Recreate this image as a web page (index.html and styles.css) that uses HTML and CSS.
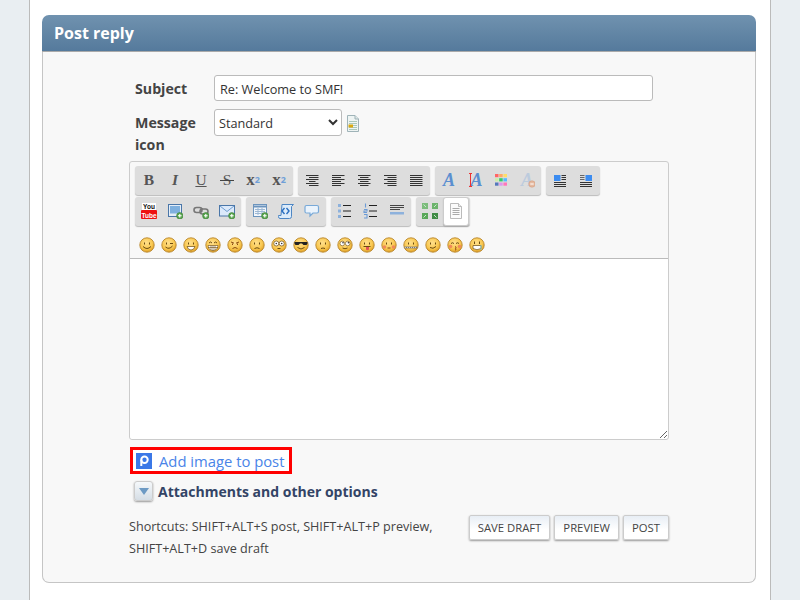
FILE: index.html
```html
<!DOCTYPE html>
<html lang="en">
<head>
<meta charset="utf-8">
<title>Post reply</title>
<link rel="stylesheet" href="styles.css">
</head>
<body>
<svg class="defs" width="0" height="0">
  <defs>
    <radialGradient id="sm" cx="45%" cy="35%" r="70%"><stop offset="0" stop-color="#ffdf8c"/><stop offset=".6" stop-color="#f9c850"/><stop offset="1" stop-color="#d9951c"/></radialGradient>
    <g id="face"><circle cx="8" cy="8" r="7.200" fill="url(#sm)" stroke="#b8862c" stroke-width=".9"/></g>
    <g id="eyes"><path d="M5.500 5.500v2M10.500 5.500v2" stroke="#6b4a10" stroke-width="1"/></g>
    <g id="plus"><circle cx="12.800" cy="12.800" r="3.200" fill="#5aa650" stroke="#3d7d36" stroke-width=".6"/><path d="M11 12.800h3.600M12.800 11v3.600" stroke="#fff" stroke-width="1.100"/></g>
  </defs>
</svg>
<div class="wrapper">
  <section class="panel">
    <h2 class="panel-title">Post reply</h2>
    <form class="panel-body">
      <div class="fields">
        <div class="field">
          <label class="field-label">Subject</label>
          <input class="subject" type="text" value="Re: Welcome to SMF!">
        </div>
        <div class="field">
          <label class="field-label">Message icon</label>
          <select class="icon-select"><option>Standard</option></select>
          <svg class="msg-icon" width="12" height="17" viewBox="0 0 12 17"><path d="M.5.500h7.500l3.500 3.500v12.500H.5z" fill="#eef4f3" stroke="#9fb3b8"/><path d="M8 .5v3.500h3.500" fill="#dfe8e8" stroke="#9fb3b8"/><path d="M2 6.500h8M2 8.500h8M2 10.500h8M2 12.500h8M2 14.500h8" stroke="#a9c8b8"/><rect x="1.500" y="9.500" width="4.500" height="3" fill="#d9a810"/></svg>
        </div>
      </div>

      <div class="editor">
        <div class="toolbar">
          <div class="tool-row">
            <div class="tool-group">
              <span class="tool glyph">B</span>
              <span class="tool glyph italic">I</span>
              <span class="tool glyph thin"><span class="under">U</span></span>
              <span class="tool glyph thin"><span class="strike">S</span></span>
              <span class="tool glyph low">x<sup class="script">2</sup></span>
              <span class="tool glyph low">x<sub class="script">2</sub></span>
            </div>
            <div class="tool-group">
              <span class="tool"><svg class="ic" viewBox="0 0 16 16"><path d="M2 3.500h12.500M5 5.500h9.500M2 7.500h12.500M5 9.500h6.500M2 11.500h12.500M5 13.500h9.500" stroke="#333"/></svg></span>
              <span class="tool"><svg class="ic" viewBox="0 0 16 16"><path d="M2 3.500h12.500M2 5.500h9M2 7.500h12.500M2 9.500h9M2 11.500h12.500M2 13.500h9" stroke="#333"/></svg></span>
              <span class="tool"><svg class="ic" viewBox="0 0 16 16"><path d="M2 3.500h12.500M4 5.500h8.500M2 7.500h12.500M4 9.500h8.500M2 11.500h12.500M4 13.500h8.500" stroke="#333"/></svg></span>
              <span class="tool"><svg class="ic" viewBox="0 0 16 16"><path d="M2 3.500h12.500M5.500 5.500h9M2 7.500h12.500M5.500 9.500h9M2 11.500h12.500M5.500 13.500h9" stroke="#333"/></svg></span>
              <span class="tool"><svg class="ic" viewBox="0 0 16 16"><path d="M2 3.500h12.500M2 5.500h12.500M2 7.500h12.500M2 9.500h12.500M2 11.500h12.500M2 13.500h12.500" stroke="#333"/></svg></span>
            </div>
            <div class="tool-group">
              <span class="tool"><span class="font-a">A</span></span>
              <span class="tool"><span class="font-a shifted">A</span><svg class="ic over" viewBox="0 0 16 16"><path d="M3.500 1.500v13M2 1.500h3M2 14.500h3" stroke="#e33"/></svg></span>
              <span class="tool"><svg class="palette" viewBox="0 0 12 12"><rect width="3.500" height="3.200" fill="#f66"/><rect x="4.200" width="3.500" height="3.200" fill="#fa6"/><rect x="8.400" width="3.600" height="3.200" fill="#fd6"/><rect y="4.200" width="3.500" height="3.200" fill="#cea"/><rect x="4.200" y="4.200" width="3.500" height="3.200" fill="#3c6"/><rect x="8.400" y="4.200" width="3.600" height="3.200" fill="#5bf"/><rect y="8.500" width="3.500" height="3.200" fill="#57b"/><rect x="4.200" y="8.500" width="3.500" height="3.200" fill="#d9e"/><rect x="8.400" y="8.500" width="3.600" height="3.200" fill="#f7b"/></svg></span>
              <span class="tool"><span class="font-a faded">A</span><svg class="ic over" viewBox="0 0 16 16"><circle cx="13" cy="12" r="3.200" fill="#e5b9a0" stroke="#d49a7a" stroke-width=".6"/><path d="M11.300 12h3.400" stroke="#fff"/></svg></span>
            </div>
            <div class="tool-group">
              <span class="tool"><svg class="ic" viewBox="0 0 16 16"><rect x="2" y="3" width="6.500" height="6" fill="#3c8cf0"/><path d="M9.500 3.500H14M9.500 5.500H14M9.500 7.500H14M2 10.500h12M2 12.500h12M2 14.500h12" stroke="#333"/></svg></span>
              <span class="tool"><svg class="ic" viewBox="0 0 16 16"><rect x="7.500" y="3" width="6.500" height="6" fill="#3c8cf0"/><path d="M2 3.500h4.500M2 5.500h4.500M2 7.500h4.500" stroke="#666"/><path d="M2 10.500h12M2 12.500h12M2 14.500h12" stroke="#333"/></svg></span>
            </div>
          </div>
          <div class="tool-row">
            <div class="tool-group">
              <span class="tool"><svg class="ic" viewBox="0 0 16 16"><rect y="7" width="16" height="9" rx="1" fill="#e11"/><rect x="1" width="14" height="7" fill="#fff"/><text x="8" y="6" class="yt-you">You</text><text x="8" y="14.500" class="yt-tube">Tube</text></svg></span>
              <span class="tool"><svg class="ic" viewBox="0 0 16 16"><rect x="1.500" y="1.500" width="13" height="12" fill="#e4edf7" stroke="#4a76a8"/><rect x="3" y="3" width="10" height="7.500" fill="#7fb0de"/><use href="#plus"/></svg></span>
              <span class="tool"><svg class="ic" viewBox="0 0 16 16"><path d="M3.500 4.500h3a2.500 2.500 0 0 1 0 5h-3a2.500 2.500 0 0 1 0-5zM9.500 6h3a2.500 2.500 0 0 1 0 5h-3a2.500 2.500 0 0 1 0-5z" fill="none" stroke="#777" stroke-width="1.600"/><use href="#plus"/></svg></span>
              <span class="tool"><svg class="ic" viewBox="0 0 16 16"><rect x=".5" y="2.500" width="15" height="10.500" fill="#dbe9fa" stroke="#4a76a8"/><path d="M1 3l7 5.500L15 3" fill="none" stroke="#6f9dd0"/><use href="#plus"/></svg></span>
            </div>
            <div class="tool-group">
              <span class="tool"><svg class="ic" viewBox="0 0 16 16"><rect x="1.500" y="1.500" width="13" height="12" fill="#f2f6fb" stroke="#6c94bd"/><path d="M2 3.500h12" stroke="#6c94bd" stroke-width="2"/><path d="M3 6.500h10M3 8.500h10M3 10.500h10M6 5v7M10 5v7" stroke="#9db8d4"/><use href="#plus"/></svg></span>
              <span class="tool"><svg class="ic" viewBox="0 0 16 16"><path d="M4 1.500h11.500l-2 2v10q0 2-2 2H2q-1.500 0-1.500-2v-1H3z" fill="#dcebfa" stroke="#4d86c4"/><path d="M6.500 5L4 8l2.500 3M8.500 5L11 8l-2.500 3" fill="none" stroke="#2a6fc0" stroke-width="1.400"/></svg></span>
              <span class="tool"><svg class="ic" viewBox="0 0 16 16"><path d="M2.500 2.500h10.500q1.500 0 1.500 1.500v4.500q0 1.500-1.500 1.500H9l-3 3v-3H2.500Q1 10 1 8.500V4q0-1.500 1.500-1.500z" fill="#eaf3fc" stroke="#78a9d8" stroke-width="1.200"/></svg></span>
            </div>
            <div class="tool-group">
              <span class="tool"><svg class="ic" viewBox="0 0 16 16"><path d="M1 1h3v3H1zM1 6.500h3v3H1zM1 12h3v3H1z" fill="#8db1dc"/><path d="M6 2.500h8M6 8h8M6 13.500h8" stroke="#222"/></svg></span>
              <span class="tool"><svg class="ic" viewBox="0 0 16 16"><path d="M2.500 .5v4M1 6.500h3v1.500H1v1.500h3M1 11.500h3v3.500H1" fill="none" stroke="#6c9bd6" stroke-width="1.100"/><path d="M6 2.500h8M6 8h8M6 13.500h8" stroke="#222"/></svg></span>
              <span class="tool"><svg class="ic" viewBox="0 0 16 16"><path d="M1 2.500h14M1 4.500h14M1 6.500h10" stroke="#444"/><rect x="1" y="9" width="14" height="2.500" fill="#8db1dc"/></svg></span>
            </div>
            <div class="tool-group">
              <span class="tool"><svg class="ic" viewBox="0 0 16 16"><rect width="6" height="6" fill="#7cbc7c"/><rect x="10" width="6" height="6" fill="#6cb36c"/><rect y="10" width="6" height="6" fill="#5aa85a"/><rect x="10" y="10" width="6" height="6" fill="#3f8a45"/><path d="M1.500 1.500L4 4M14.500 1.500L12 4M1.500 14.500L4 12M14.500 14.500L12 12" stroke="#c8e8c8"/></svg></span>
              <span class="tool active"><svg class="ic" viewBox="0 0 16 16"><path d="M2.500.5h8l3 3v12h-11z" fill="#fbfbfb" stroke="#bbb"/><path d="M10.500.5v3h3" fill="#eee" stroke="#bbb"/><path d="M4.500 5.500h7M4.500 7.500h7M4.500 9.500h7M4.500 11.500h7" stroke="#aaa"/></svg></span>
            </div>
          </div>
        </div>
        <div class="smileys">
          <svg class="sm" viewBox="0 0 16 16"><use href="#face"/><use href="#eyes"/><path d="M4 9.500q4 4 8 0" fill="none" stroke="#6b4a10"/></svg>
          <svg class="sm" viewBox="0 0 16 16"><use href="#face"/><path d="M5.500 5.500v2M9 6.500h3" stroke="#6b4a10"/><path d="M4.500 10q3.500 3 7-1" fill="none" stroke="#6b4a10"/></svg>
          <svg class="sm" viewBox="0 0 16 16"><use href="#face"/><use href="#eyes"/><path d="M4 9.500h8q-1 3.500-4 3.500t-4-3.500z" fill="#fff" stroke="#6b4a10" stroke-width=".7"/></svg>
          <svg class="sm" viewBox="0 0 16 16"><use href="#face"/><path d="M4 6q1.500-2 3 0M9 6q1.500-2 3 0" fill="none" stroke="#6b4a10"/><path d="M3 8.500h10q-.5 5-5 5t-5-5zM3 10.500h10M6 8.500v4.500M8 8.500v5M10 8.500v4.500" fill="#fff" stroke="#6b4a10" stroke-width=".6"/></svg>
          <svg class="sm" viewBox="0 0 16 16"><use href="#face"/><path d="M4 5l3 1.200M12 5L9 6.200M5.500 6.500v1.500M10.500 6.500v1.500M5.500 11.500q2.500-2 5 0" fill="none" stroke="#8a4a10"/></svg>
          <svg class="sm" viewBox="0 0 16 16"><use href="#face"/><use href="#eyes"/><path d="M5.500 11.500q2.500-1.500 5 0" fill="none" stroke="#6b4a10"/></svg>
          <svg class="sm" viewBox="0 0 16 16"><use href="#face"/><circle cx="5.300" cy="6.500" r="2.500" fill="#fff" stroke="#6b4a10" stroke-width=".7"/><circle cx="10.700" cy="6.500" r="2.500" fill="#fff" stroke="#6b4a10" stroke-width=".7"/><circle cx="5.300" cy="6.500" r=".8" fill="#333"/><circle cx="10.700" cy="6.500" r=".8" fill="#333"/><path d="M6.500 11.500h3" stroke="#6b4a10"/></svg>
          <svg class="sm" viewBox="0 0 16 16"><use href="#face"/><path d="M1.500 5h13v1.500l-1 1.500h-3L9 6.500H7L5.500 8h-3l-1-1.500z" fill="#222"/><path d="M4.500 10.500q3.500 3 7 0" fill="none" stroke="#6b4a10"/></svg>
          <svg class="sm" viewBox="0 0 16 16"><use href="#face"/><use href="#eyes"/><path d="M6 11.500q2-1 4 0" fill="none" stroke="#6b4a10"/></svg>
          <svg class="sm" viewBox="0 0 16 16"><use href="#face"/><circle cx="5.300" cy="6.500" r="2.300" fill="#fff" stroke="#6b4a10" stroke-width=".6"/><circle cx="10.700" cy="6.500" r="2.300" fill="#fff" stroke="#6b4a10" stroke-width=".6"/><circle cx="6" cy="5.800" r=".8" fill="#333"/><circle cx="11.400" cy="5.800" r=".8" fill="#333"/><path d="M5.500 11q2.500 1.500 5 0" fill="none" stroke="#6b4a10"/></svg>
          <svg class="sm" viewBox="0 0 16 16"><use href="#face"/><use href="#eyes"/><path d="M4.500 9.500h7" stroke="#6b4a10"/><path d="M7 10h3v2.500q-1.500 1.500-3 0z" fill="#e0505a"/></svg>
          <svg class="sm" viewBox="0 0 16 16"><use href="#face"/><use href="#eyes"/><circle cx="3.500" cy="10" r="1.800" fill="#f08a5a"/><circle cx="12.500" cy="10" r="1.800" fill="#f08a5a"/><path d="M6.500 11h3" stroke="#8a4a10"/></svg>
          <svg class="sm" viewBox="0 0 16 16"><use href="#face"/><use href="#eyes"/><path d="M1.500 10.500h13" stroke="#777" stroke-width="1.800"/><path d="M2 10.500h12" stroke="#ddd" stroke-width=".8" stroke-dasharray="1 1"/></svg>
          <svg class="sm" viewBox="0 0 16 16"><use href="#face"/><use href="#eyes"/><path d="M5 10.500q3 2 6-1" fill="none" stroke="#6b4a10"/></svg>
          <svg class="sm" viewBox="0 0 16 16"><use href="#face"/><path d="M4 6.500q1.500-1.500 3 0M9 6.500q1.500-1.500 3 0" fill="none" stroke="#6b4a10"/><circle cx="3.500" cy="9.500" r="1.800" fill="#f08a5a"/><circle cx="12.500" cy="9.500" r="1.800" fill="#f08a5a"/><path d="M8 9.500q2 .8 .5 1.800q1.500 1-.5 2" fill="none" stroke="#8a3a10"/></svg>
          <svg class="sm" viewBox="0 0 16 16"><use href="#face"/><path d="M5.500 4.500v2.500M10.500 4.500v2.500" stroke="#6b4a10"/><path d="M4 8.500h8v3q-4 2.500-8 0z" fill="#fff" stroke="#6b4a10" stroke-width=".7"/><path d="M12 8v5" stroke="#8cc"/></svg>
        </div>
        <textarea class="message"></textarea>
      </div>

      <div class="add-image">
        <svg class="add-icon" width="16" height="16" viewBox="0 0 16 16"><rect width="16" height="16" fill="#3b78e7"/><circle cx="8.500" cy="6.800" r="3.200" fill="none" stroke="#fff" stroke-width="2"/><path d="M5.300 6.800V13" stroke="#fff" stroke-width="2"/></svg>
        <a class="add-link" href="#">Add image to post</a>
      </div>

      <div class="options">
        <span class="toggle"><svg width="10" height="7" viewBox="0 0 10 7"><path d="M0 0h10L5 7z" fill="#6d9ac4"/></svg></span>
        <strong class="options-title">Attachments and other options</strong>
      </div>

      <div class="foot">
        <p class="shortcuts">Shortcuts: SHIFT+ALT+S post, SHIFT+ALT+P preview, SHIFT+ALT+D save draft</p>
        <div class="actions">
          <button type="button" class="btn">SAVE DRAFT</button>
          <button type="button" class="btn">PREVIEW</button>
          <button type="button" class="btn">POST</button>
        </div>
      </div>
    </form>
  </section>
</div>
</body>
</html>
```
FILE: styles.css
```css
* { box-sizing: border-box; }
html, body { margin: 0; height: 600px; overflow: hidden; }
body { background: #e9eef2; font-family: "Open Sans", "Noto Sans", sans-serif; color: #4d4d4d; }
.defs { position: absolute; }
.wrapper { width: 742px; height: 600px; margin-left: 29px; background: #fff; border-left: 1px solid #bbb; border-right: 1px solid #bbb; padding: 15px 13px 0 12px; }
.panel { width: 714px; }
.panel-title { margin: 0; height: 37px; padding: 0 12px; line-height: 37px; font-size: 16px; font-weight: 700; color: #fff; background: linear-gradient(#7092af, #557a9c); border-radius: 7px 7px 0 0; border-bottom: 1px solid #aaa; }
.panel-body { height: 531px; background: #f8f8f8; border: 1px solid #c5c5c5; border-top: 0; border-radius: 0 0 7px 7px; padding: 23px 86px 0; }
.fields { padding-left: 6px; display: flex; flex-direction: column; gap: 8px; }
.field { display: flex; align-items: flex-start; }
.field-label { width: 79px; font-size: 14.2px; font-weight: 700; line-height: 22px; color: #444; padding-top: 3px; }
.subject { width: 439px; height: 26px; padding: 1px 5px 0; font: 12.7px "Open Sans", sans-serif; color: #333; background: #fff; border: 1px solid #bbb; border-radius: 3px; }
.icon-select { width: 128px; height: 27px; padding: 0; font: 12.7px "Open Sans", sans-serif; color: #333; background: #fff; border: 1px solid #bbb; border-radius: 3px; }
.msg-icon { margin: 6px 0 0 5px; }
.editor { width: 540px; height: 279px; margin-top: 5px; background: #f8f8f8; border: 1px solid #ccc; border-radius: 3px; display: flex; flex-direction: column; }
.toolbar { padding: 4px 5px 0; display: flex; flex-direction: column; gap: 2px; }
.tool-row { display: flex; gap: 5px; }
.tool-group { display: flex; height: 29px; padding: 0 1px; background: #ddd; border-radius: 3px; box-shadow: 0 1px 1px #bbb; }
.tool { position: relative; width: 26px; height: 29px; padding-bottom: 1px; display: flex; align-items: center; justify-content: center; }
.tool.active { background: #fff; border: 1px solid #ccc; border-radius: 3px; box-shadow: 0 1px 1px #aaa; }
.ic { width: 16px; height: 16px; display: block; flex: none; }
.ic.over { position: absolute; left: 5px; top: 6px; }
.palette { width: 12px; height: 12px; display: block; }
.glyph { font: 700 15.5px "Liberation Serif", serif; color: #555; }
.glyph.italic { font-style: italic; }
.glyph.thin { font-weight: 400; }
.under { text-decoration: underline; }
.strike { position: relative; }
.strike::after { content: ""; position: absolute; left: -3px; right: -3px; top: 50%; height: 1px; background: #444; }
.glyph.low { font-size: 17px; }
.script { font: 700 9px "Open Sans", sans-serif; color: #6f9fd8; line-height: 0; }
.font-a { font: italic 700 18px "Liberation Serif", serif; color: #5b8fd0; }
.font-a.shifted { margin-left: 3px; }
.font-a.faded { color: #bccbdd; }
.yt-you, .yt-tube { font: 700 6.500px "Liberation Sans", sans-serif; text-anchor: middle; }
.yt-you { fill: #111; }
.yt-tube { fill: #fff; }
.smileys { display: flex; gap: 6px; padding: 11px 9px 0; height: 32px; flex: none; }
.sm { width: 16px; height: 16px; flex: none; }
.message { flex: 1; width: 100%; display: block; background: #fff; border: 0; border-top: 1px solid #bbb; border-radius: 0 0 3px 3px; padding: 0; margin: 0; }
.add-image { width: 162px; height: 27px; margin: 7px 0 0 1px; background: #fff; border: 3px solid #f00; display: flex; align-items: center; gap: 7px; padding-left: 3px; }
.add-icon { flex: none; }
.add-link { font-size: 14.8px; padding-top: 1px; color: #4a84e8; text-decoration: none; white-space: nowrap; }
.options { display: flex; align-items: center; gap: 5px; margin: 7px 0 0 5px; height: 20px; }
.toggle { width: 19px; height: 20px; display: flex; align-items: center; justify-content: center; border-radius: 3px; background: linear-gradient(#f5f8fb, #d5dde5); border: 1px solid #ccc; box-shadow: 0 1px 2px #999; }
.options-title { font-size: 14px; font-weight: 700; color: #334466; white-space: nowrap; }
.foot { display: flex; justify-content: space-between; align-items: flex-start; width: 540px; margin-top: 14px; }
.shortcuts { margin: 0; width: 320px; padding-top: 1px; font-size: 12.6px; line-height: 22px; color: #444; }
.actions { display: flex; gap: 4px; }
.btn { height: 25px; padding: 0 8px; font: 11.3px "Open Sans", sans-serif; color: #444; background: linear-gradient(#e8eef5, #fff 60%); border: 1px solid #ccc; border-radius: 2px; box-shadow: 0 1px 2px #999; }
```
